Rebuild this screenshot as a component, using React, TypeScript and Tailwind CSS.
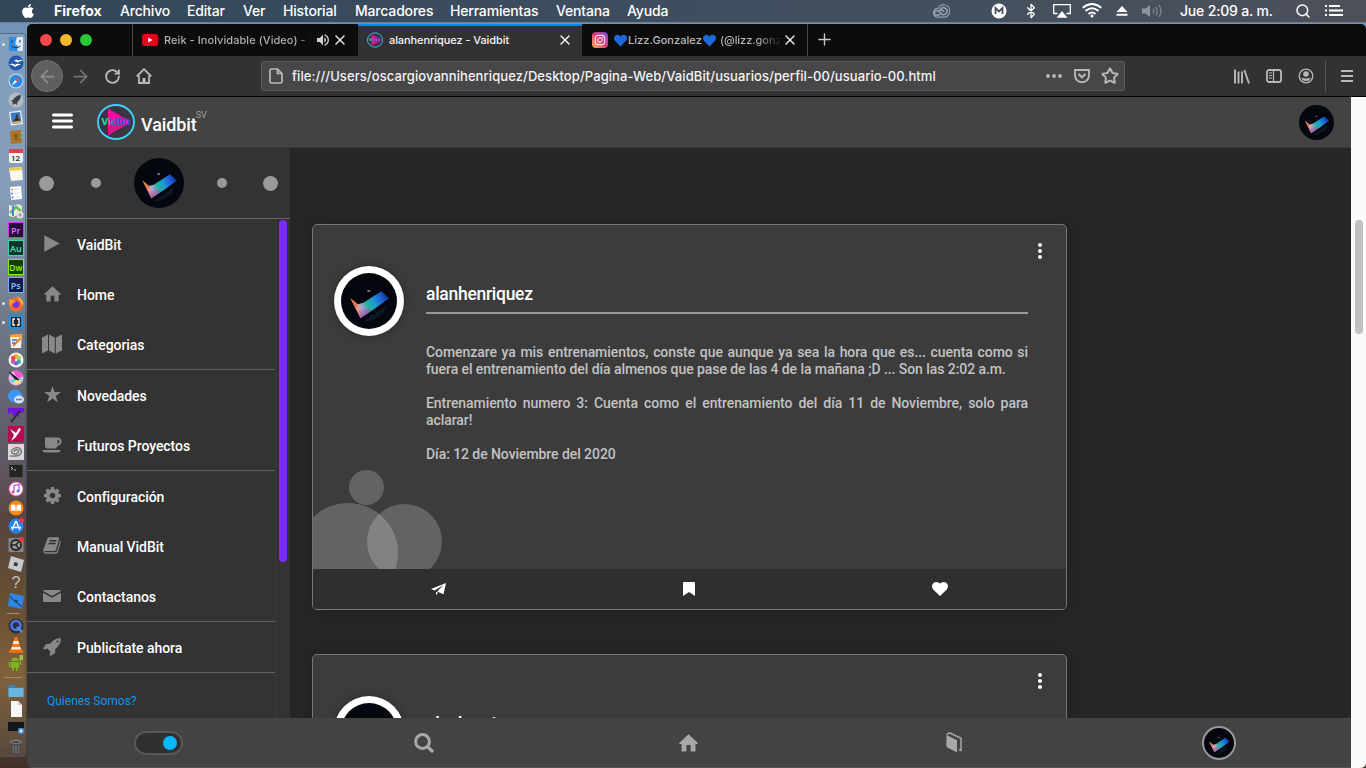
import React from "react";
import { FaApple, FaHeart, FaInstagram } from "react-icons/fa";
import { ArrowLeft, ArrowRight, Bluetooth, Plus, RotateCw, Search, Star, X } from "lucide-react";
import { MdMoreVert, MdVolumeUp } from "react-icons/md";

/* ---------- shared drawings ---------- */

function Avatar({ id, className }: { id: string; className: string }) {
  return (
    <svg viewBox="0 0 50 50" className={className}>
      <defs>
        <linearGradient id={id} x1="9" y1="34" x2="42" y2="17" gradientUnits="userSpaceOnUse">
          <stop offset="0" stopColor="#ef7a3c" />
          <stop offset="0.16" stopColor="#e8a090" />
          <stop offset="0.27" stopColor="#a8a4d0" />
          <stop offset="0.42" stopColor="#22b39c" />
          <stop offset="0.6" stopColor="#1c98d4" />
          <stop offset="0.8" stopColor="#1e58d4" />
          <stop offset="0.92" stopColor="#123a9c" />
          <stop offset="1" stopColor="#060d28" />
        </linearGradient>
        <linearGradient id={id + "s"} x1="17" y1="31" x2="21" y2="39" gradientUnits="userSpaceOnUse">
          <stop offset="0" stopColor="#b0449a" stopOpacity="0" />
          <stop offset="1" stopColor="#8a4ab0" stopOpacity="0.9" />
        </linearGradient>
      </defs>
      <circle cx="25" cy="25" r="25" fill="#04070d" />
      <path d="M20 43 L40 29 L38 36 L26 43Z" fill="#0d1824" />
      <path d="M8.500 22.500 L15 28 L20 26.500 L36 16.300 L43 22.500 L30 32 L17.300 40.300Z" fill={"url(#" + id + ")"} />
      <path d="M8.500 22.500 L15 28 L13.500 33Z" fill="#ee6c36" opacity="0.8" />
      <path d="M13.500 33 L22 31 L28 33 L17.300 40.300Z" fill={"url(#" + id + "s)"} />
      <ellipse cx="24.800" cy="16" rx="1.500" ry="0.700" fill="#b0b4b8" />
    </svg>
  );
}

function Logo({ id, className }: { id: string; className: string }) {
  return (
    <svg viewBox="0 0 38 36" className={className}>
      <defs>
        <linearGradient id={id} x1="0" x2="1">
          <stop offset="0" stopColor="#2ef08c" />
          <stop offset="0.25" stopColor="#30b8b8" />
          <stop offset="0.45" stopColor="#2c62c8" />
          <stop offset="1" stopColor="#3d50f0" />
        </linearGradient>
      </defs>
      <ellipse cx="19" cy="18" rx="18" ry="17" fill="#3a3540" stroke="#3fd0fa" strokeWidth="1.900" />
      <path d="M11 4.500 L34 18 L11 31.500Z" fill="#fa0aa0" />
      <path d="M14 21 L28 21 L11 31.500 V26Z" fill="#d01888" />
      <text x="4.500" y="21.300" fontSize="9.500" fontFamily="DejaVu Sans" fontWeight="700" textLength="29" lengthAdjust="spacingAndGlyphs" fill={"url(#" + id + ")"}>VidBit</text>
    </svg>
  );
}

function HomeGlyph({ className }: { className: string }) {
  return (
    <svg viewBox="0 0 18 17" className={className} fill="currentColor">
      <path d="M9 0.300 L17.800 8.600 Q18 9.400 17.200 9.400 H15.600 V16 Q15.600 16.600 15 16.600 H11 V10.400 H7 V16.600 H3 Q2.400 16.600 2.400 16 V9.400 H0.800 Q0 9.400 0.200 8.600Z" />
    </svg>
  );
}

function BookGlyph({ className }: { className: string }) {
  return (
    <svg viewBox="0 0 1664 1792" className={className} fill="currentColor">
      <path d="M1639 478q40 57 18 129l-275 906q-19 64-76.500 107.500T1183 1664H260q-77 0-148.500-53.500T12 1479q-24-67-2-127 0-4 3-27t4-37q1-8-3-21.500T11 1247q2-11 8-21t16.500-23.500T52 1179q23-38 45-91.500t30-91.500q3-10 .5-30t-.5-28q3-11 17-28t17-23q21-36 42-92t25-90q1-9-2.500-32t.5-28q4-13 22-30.500t22-22.500q19-26 42.500-84.500T340 409q1-8-3-25.500t-2-26.500q2-8 9-18t18-23 17-21q8-12 16.500-30.500t15-35 16-36 19.500-32T473 136t36-11.500T556 130l-1 3q38-9 51-9h761q74 0 114 56t18 130l-274 906q-36 119-71.500 153.500T1025 1404H156q-27 0-38 15-11 16-1 43 24 70 144 70h923q29 0 56-15.500t35-41.500l300-987q7-22 5-57 38 15 59 43zM575 480q-4 13 2 22.500t20 9.500h608q13 0 25.500-9.500T1247 480l21-64q4-13-2-22.500t-20-9.500H638q-13 0-25.500 9.500T596 416zm-83 256q-4 13 2 22.500t20 9.500h608q13 0 25.500-9.500t16.500-22.500l21-64q4-13-2-22.500t-20-9.500H555q-13 0-25.500 9.500T513 672z" />
    </svg>
  );
}

function GearGlyph({ className }: { className: string }) {
  return (
    <svg viewBox="0 128 1536 1536" className={className} fill="currentColor">
      <path d="M1024 896q0-106-75-181t-181-75-181 75-75 181 75 181 181 75 181-75 75-181zm512-109v222q0 12-8 23t-20 13l-185 28q-19 54-39 91 35 50 107 138 10 12 10 25t-9 23q-27 37-99 108t-94 71q-12 0-26-9l-138-108q-44 23-91 38-16 136-29 186-7 28-36 28H657q-14 0-24.500-8.500T621 1634l-28-184q-49-16-90-37l-141 107q-10 9-25 9-14 0-25-11-126-114-165-168-7-10-7-23 0-12 8-23 15-21 51-66.500t54-70.500q-27-50-41-99L29 1025q-13-2-21-12.500T0 989V787q0-12 8-23t19-13l186-28q14-46 39-92-40-57-107-138-10-12-10-24 0-10 9-23 26-36 98.500-107.500T337 267q13 0 26 10l138 107q44-23 91-38 16-136 29-186 7-28 36-28h222q14 0 24.500 8.500T915 162l28 184q49 16 90 37l142-107q9-9 24-9 13 0 25 10 129 119 165 170 7 8 7 22 0 12-8 23-15 21-51 66.500t-54 70.500q26 50 41 98l183 28q13 2 21 12.500t8 23.500z" />
    </svg>
  );
}

function RocketGlyph({ className }: { className: string }) {
  return (
    <svg viewBox="0 120 1670 1670" className={className} fill="currentColor">
      <path d="M1440 448q0-40-28-68t-68-28-68 28-28 68 28 68 68 28 68-28 28-68zm224-288q0 249-75.500 430.500T1335 958q-81 80-195 176l-20 379q-2 16-16 26l-384 224q-7 4-16 4-12 0-23-9l-64-64q-13-14-8-32l85-276-281-281-276 85q-3 1-9 1-14 0-23-9L41 1118q-17-19-5-39l224-384q10-14 26-16l379-20q96-114 176-195 188-187 358-258t431-71q14 0 24 9.500t10 22.500z" />
    </svg>
  );
}

function CupGlyph({ className }: { className: string }) {
  return (
    <svg viewBox="0 0 20 16" className={className} fill="currentColor">
      <path fillRule="evenodd" d="M3 0.500 H15.500 Q19.500 0.800 19.500 4.500 Q19.500 8.500 15.500 8.700 Q15 11.500 12 11.500 H6 Q3 11.500 3 8.700Z M15.500 2.500 V6.700 Q17.500 6.400 17.500 4.500 Q17.500 2.800 15.500 2.500Z M0.300 13 H18.700 Q18.200 15.500 15.500 15.500 H3.500 Q0.800 15.500 0.300 13Z" />
    </svg>
  );
}

function PlayGlyph({ className }: { className: string }) {
  return <svg viewBox="0 0 16 17" className={className} fill="currentColor"><path d="M0.300 0.200 L15.700 8.500 L0.300 16.800Z" /></svg>;
}

function MailGlyph({ className }: { className: string }) {
  return (
    <svg viewBox="0 0 18 12" className={className} fill="currentColor">
      <path d="M1 0 H17 Q18 0 17.600 1.200 L9 6 L0.400 1.200 Q0 0 1 0Z M0 2.800 L9 7.800 L18 2.800 V11 Q18 12 17 12 H1 Q0 12 0 11Z" />
    </svg>
  );
}

function PlaneGlyph({ className }: { className: string }) {
  return (
    <svg viewBox="0 0 15 12" className={className} fill="currentColor">
      <path d="M15 0 L0 6 L3.700 7.600 L12.500 2 L6.200 8.600 L12.500 11.200Z M5 8.900 V12 L7.200 9.800Z" />
    </svg>
  );
}

function BooksGlyph({ className }: { className: string }) {
  return (
    <svg viewBox="0 0 16 21" className={className}>
      <path d="M0.500 3 L11 8.200 V20.500 L1.500 15.500 Q0.300 15 0.300 13.500Z" fill="#a8a8a8" />
      <path d="M1 3 Q1.800 0.500 4 1 L15 6.300 V18.300 L13 17.500" fill="none" stroke="#a8a8a8" strokeWidth="1.500" />
    </svg>
  );
}

/* ---------- system menu bar ---------- */

const menus = [
  { label: "Archivo", w: "w-[67px]" },
  { label: "Editar", w: "w-[56px]" },
  { label: "Ver", w: "w-[40px]" },
  { label: "Historial", w: "w-[72px]" },
  { label: "Marcadores", w: "w-[95px]" },
  { label: "Herramientas", w: "w-[106px]" },
  { label: "Ventana", w: "w-[71px]" },
  { label: "Ayuda", w: "w-[60px]" },
];

function MenuBar() {
  return (
    <div className="flex h-[23px] shrink-0 items-center border-b border-[#6f7d8b] bg-linear-to-r from-[#33465a] via-[#3e4e60] to-[#4c5059] pb-px font-[Inter,sans-serif] text-[14px] font-medium tracking-[-0.180px] whitespace-nowrap text-white">
      <div className="w-[54px] pl-[20px]"><FaApple className="size-[16px]" /></div>
      <div className="w-[66px] font-bold tracking-[0.050px]">Firefox</div>
      {menus.map((m) => <div key={m.label} className={m.w}>{m.label}</div>)}
      <div className="ml-auto flex items-center">
        <svg viewBox="0 0 20 14" className="mr-[41px] h-[14px] w-[19px]" fill="none" stroke="#939eaa" strokeWidth="1.200">
          <path d="M6 13.400 H13.500 A6.400 6.400 0 1 0 7.500 4.200 A4.700 4.700 0 0 0 6 13.400Z" />
          <path d="M9.500 10.500 Q6 12.500 4 10.500 Q2.500 8 5 6.500 Q7.500 6 9.500 8.500 L11.500 10.500 Q15 12 16.800 8.500 Q17.500 5 14 3.500 Q10.500 3 9 6 Q12 5 13.500 8" strokeWidth="1.700" />
        </svg>
        <svg viewBox="0 0 16 16" className="mr-[16px] size-[16px]"><circle cx="8" cy="8" r="7.500" fill="#fff" /><path d="M4.500 11 V5 L8 8.500 L11.500 5 V11" fill="none" stroke="#44505e" strokeWidth="1.800" /></svg>
        <Bluetooth className="mr-[14px] size-[16px]" strokeWidth={2} />
        <svg viewBox="0 0 18 14" className="mr-[11px] h-[14px] w-[18px]" fill="none" stroke="#fff" strokeWidth="1.300"><path d="M4.500 9.500 H0.700 V0.700 H17.300 V9.500 H13.500" /><path d="M9 7 L14.500 13.800 H3.500Z" fill="#fff" stroke="none" /></svg>
        <svg viewBox="0 0 20 15" className="mr-[14px] h-[15px] w-[20px]" fill="none" stroke="#fff" strokeWidth="1.900"><path d="M0.700 4.800 Q10 -2.800 19.300 4.800 M3.500 8 Q10 2.600 16.500 8 M6.500 11 Q10 8 13.500 11" /><circle cx="10" cy="13" r="1.500" fill="#fff" stroke="none" /></svg>
        <svg viewBox="0 0 12 10" className="mr-[14px] h-[10px] w-[12px]" fill="#fff"><path d="M6 0 L11.500 6 H0.500Z M0.500 7.800 H11.500 V9.800 H0.500Z" /></svg>
        <svg viewBox="0 0 21 14" className="mr-[17px] h-[14px] w-[21px]" fill="none" stroke="#7d8792" strokeWidth="1.300"><path d="M0 4.500 H3.500 L8 1 V13 L3.500 9.500 H0Z" fill="#8c96a0" stroke="none" /><path d="M11 4.500 Q12.500 7 11 9.500 M14 2.800 Q16.500 7 14 11.200 M17 1 Q21 7 17 13" /></svg>
        <div className="w-[115px]">Jue 2:09 a. m.</div>
        <Search className="mr-[14px] size-[16px]" strokeWidth={2.200} />
        <svg viewBox="0 0 18 11" className="mr-[23px] h-[11px] w-[18px]" stroke="#fff" strokeWidth="1.800"><path d="M0 1 H2 M4 1 H15 M0 5.500 H2 M4 5.500 H18 M0 10 H2 M4 10 H18" /></svg>
      </div>
    </div>
  );
}

/* ---------- dock ---------- */

const dockArt: React.ReactNode[] = [
  <><rect x="1" y="1" width="14" height="14" rx="1" fill="#dfe9f5" /><path d="M1 1 H9 Q7 6 7.500 9 H9.500 V15 H1Z" fill="#2d8bea" /><path d="M4 4V6.500M12 4V6.500M3.500 10Q8 13.500 12.500 10" stroke="#234" fill="none" /></>,
  <><circle cx="8" cy="8" r="7.500" fill="#2259ae" /><path d="M6 6Q9 3 10 6Q12 4 15 5.500Q11 6 10 7.500Q8 6 6 6M1 10Q5 7 7 10Q9 8 13 9.500Q9 10 7 12Q4 9 1 10" fill="#fff" /></>,
  <><circle cx="8" cy="8" r="7.500" fill="#d8dde4" /><circle cx="8" cy="8" r="6.500" fill="#288be5" /><path d="M12.500 3.500 L7 7 L9 9Z" fill="#f44" /><path d="M3.500 12.500 L7 7 L9 9Z" fill="#fff" /></>,
  <><circle cx="8" cy="8" r="7.500" fill="#b4bcc0" /><path d="M13 3 Q8 3 5 8 L2.500 9 L5 10 L4 13 L7 11.500 L9 13 L9.500 10 Q13 7 13 3" fill="#39434c" /></>,
  <><path d="M1 2 L13 0.500 L15 14 L3 15.500Z" fill="#eef3f8" /><path d="M2.500 3 L12 2 L13.500 13 L4 14Z" fill="#397ac5" /><path d="M9 3 L7 9 L5 12 L13 11 L10 8Z" fill="#3b3023" /><path d="M4 12L13 10.500L13.300 13L4.200 14Z" fill="#c9b27a" /></>,
  <><path d="M2 2 L13 1 L14 14 L3 15Z" fill="#a9762f" /><path d="M13 3h2v2h-2z" fill="#6bb8db" /><path d="M13 7h2v2h-2z" fill="#78b85d" /><circle cx="8" cy="7" r="2" fill="#80541f" /><path d="M5 11Q8 8 11 11" fill="#80541f" /></>,
  <><rect x="1" y="1" width="14" height="14" rx="2" fill="#f4f4f4" /><path d="M1 1H15V5H1Z" fill="#e04646" /><text x="3" y="13" fontSize="8" fontFamily="Roboto" fontWeight="600" fill="#333">12</text></>,
  <><path d="M1 2 L14 1 L15 14 L3 15Z" fill="#faf8ec" /><path d="M1 2 L14 1V4L1 5Z" fill="#efcf52" /></>,
  <><path d="M2 2 L13 1 L14 14 L3 15Z" fill="#fff" /><path d="M6 4H11M6 8H12M6 12H12" stroke="#ddd" /><circle cx="4" cy="4.500" r="1" fill="#e76" /><circle cx="4" cy="8.500" r="1" fill="#5a7be8" /><circle cx="4.500" cy="12.500" r="1" fill="#94d" /></>,
  <><path d="M1 2 L5 3 L10 1 L14 3V14L10 12L5 14L1 13Z" fill="#e8ecd9" /><path d="M2 10L8 4L13 8" stroke="#69b95b" strokeWidth="2.500" fill="none" /><path d="M5 3V13" stroke="#4886df" strokeWidth="2" /><circle cx="12" cy="12" r="3.500" fill="#ddd" /><circle cx="12" cy="12" r="1.500" fill="#999" /></>,
  <><rect x="0.500" y="0.500" width="15" height="15" fill="#260c38" stroke="#d637ef" /><text x="3" y="11.500" fontSize="9" fontFamily="Open Sans" fontWeight="600" fill="#df7cf2">Pr</text></>,
  <><rect x="0.500" y="0.500" width="15" height="15" fill="#09352e" stroke="#39d8a0" /><text x="2" y="11.500" fontSize="9" fontFamily="Open Sans" fontWeight="600" fill="#61dfb4">Au</text></>,
  <><rect x="0.500" y="0.500" width="15" height="15" fill="#173d07" stroke="#8af000" /><text x="1.200" y="11.500" fontSize="8.500" fontFamily="Open Sans" fontWeight="600" fill="#9bf41a">Dw</text></>,
  <><rect x="0.500" y="0.500" width="15" height="15" fill="#0e1c48" stroke="#70b2ed" /><text x="2.800" y="11.500" fontSize="9" fontFamily="Open Sans" fontWeight="600" fill="#8cc5f5">Ps</text></>,
  <><circle cx="8" cy="8.500" r="7" fill="#ff6b25" /><path d="M9 0 Q16 4 15 10 Q13 5 9 0" fill="#ffd23c" /><circle cx="8" cy="8.500" r="3.500" fill="#7138d7" /><path d="M1 3Q5 3 8 6Q3 7 3 11Q1 8 1 3" fill="#ff9830" /></>,
  <><rect x="0.500" y="0.500" width="15" height="15" rx="2" fill="#258ed2" /><rect x="3" y="3" width="10" height="10" fill="#222" /><path d="M7 5H5V11H7M9 5H11V11H9" stroke="#fff" strokeWidth="1.300" fill="none" /></>,
  <><path d="M2 2 L14 1 L13 15H3Z" fill="#f6f0e6" /><path d="M2 2 L14 1 V4H2Z" fill="#fa9b25" /><path d="M5 13L13 5" stroke="#d98427" strokeWidth="2" /><path d="M4 7H9M4 10H7" stroke="#446ab5" strokeWidth="1.500" /></>,
  <><circle cx="8" cy="8" r="7.500" fill="#f7f4ef" /><circle cx="8" cy="4.500" r="2.400" fill="#ffa730" /><circle cx="10.800" cy="6" r="2.300" fill="#a6d34c" /><circle cx="10.800" cy="9.700" r="2.300" fill="#48aca6" /><circle cx="8" cy="11.300" r="2.300" fill="#6570d5" /><circle cx="5.200" cy="9.700" r="2.300" fill="#c657ae" /><circle cx="5.200" cy="6" r="2.300" fill="#ef4842" /></>,
  <><circle cx="8" cy="8" r="7.500" fill="#f3b3ea" /><path d="M5 1Q12 -1 15 6L10 9Z" fill="#e65bc8" /><path d="M1 10Q8 17 15 10L12 8Z" fill="#59d7ef" /><path d="M5 13Q10 16 14 11L9 9Z" fill="#f5e677" /><path d="M1 2L8 7L11 10L7 9Z" fill="#262335" stroke="#262335" /></>,
  <><ellipse cx="7" cy="7" rx="7" ry="6.500" fill="#3b97f3" /><ellipse cx="11" cy="10.500" rx="5" ry="4" fill="#d4e4f8" /><path d="M8.200 10.500H13.800" stroke="#2c58a0" strokeWidth="1.500" strokeDasharray="1.400 0.700" /></>,
  <><path d="M0 1H16V5L11 6V11L9 7L5 9L4 5L0 7Z" fill="#7410e0" /><path d="M3 15L12 4" stroke="#302030" strokeWidth="1.800" /></>,
  <><rect width="16" height="16" fill="#b80852" /><path d="M2 3L8 7L11 2L13 3L10 8L7 12L3 15L6 9Z" fill="#fff" /></>,
  <><rect width="16" height="16" fill="#d8d8d6" /><path d="M2 12Q15 13 13 6Q10 1 4 6Q2 10 8 10Q12 8 10 6Q7 5 6 8" fill="none" stroke="#777" strokeWidth="1.500" /></>,
  <><rect x="1" y="1.500" width="14" height="13" rx="1" fill="#222" stroke="#555" /><path d="M3 4L5 5.500L3 7M6 7H8" stroke="#eee" fill="none" strokeWidth="0.800" /></>,
  <><circle cx="8" cy="8" r="7.500" fill="#e8569e" /><circle cx="8" cy="8" r="6.500" fill="#fff" /><path d="M6 11V4.500L11 3.500V10" stroke="#b05ae5" fill="none" strokeWidth="1.300" /><circle cx="5" cy="11" r="1.500" fill="#ec4c83" /><circle cx="10" cy="10" r="1.500" fill="#5474ef" /></>,
  <><circle cx="8" cy="8" r="7.500" fill="#f88b1c" /><path d="M3 5Q6 4 8 5.500Q10 4 13 5V11Q10 10 8 11.500Q6 10 3 11Z" fill="#fff" /><path d="M8 5V11" stroke="#f88b1c" /></>,
  <><circle cx="8" cy="8" r="7.500" fill="#2484f3" /><path d="M8 3L4 12M8 3L12 12M3 9.500H13" stroke="#fff" strokeWidth="1.400" /><circle cx="13.500" cy="2.500" r="2.500" fill="#ef344a" /></>,
  <><rect x="0.500" y="1" width="15" height="14" rx="1" fill="#858585" /><circle cx="8" cy="8" r="5" fill="#999" stroke="#242424" strokeWidth="1.800" /><path d="M3 8H8L11 4M8 8L11 12" stroke="#222" strokeWidth="1.300" fill="none" /><circle cx="13.500" cy="2.500" r="2.500" fill="#ef344a" /></>,
  <><path d="M3 0L16 4L13 16L0 12Z" fill="#c6c9cc" /><path d="M6.500 6L10 7L9 10.500L5.500 9.500Z" fill="#38383a" /></>,
  <><text x="3.500" y="14" fontSize="16" fontFamily="Liberation Sans" fill="#c6c2be">?</text></>,
  <><path d="M2 0L16 3L14 16L0 13Z" fill="#2e86e4" /><path d="M1 3L14 14" stroke="#15335b" /><path d="M7 6.500L10 7.500L9 10L6 9Z" fill="#20406a" /></>,
];

const dockApps: React.ReactNode[] = [
  <><circle cx="8" cy="8" r="7.500" fill="#2c3038" /><circle cx="8" cy="7.500" r="4.500" fill="none" stroke="#4a78ed" strokeWidth="2.500" /><path d="M9 9L14 14" stroke="#5788e8" strokeWidth="2.500" /></>,
  <><path d="M7 0H9L14 14H2Z" fill="#f57919" /><path d="M5.700 4H10.300L11.200 7H4.800ZM4 10H12L13 12.500H3Z" fill="#f6ede5" /><path d="M1 13H15V16H1Z" fill="#e96c10" /></>,
  <><path d="M3 6 Q3.500 2.500 7 2.500 Q10.500 2.500 11 6Z M3 7H11V13H9.500V16H8V13H6V16H4.500V13H3Z M0.800 7H2.300V12H0.800Z M11.700 4H13.200V10H11.700Z" fill="#7db321" /><rect x="11.500" y="0" width="3.500" height="5" rx="0.500" fill="#9cc840" /></>,
];

const dockFiles: React.ReactNode[] = [
  <><path d="M0.500 2H6L8 4H15.500V14H0.500Z" fill="#3587b7" /><path d="M0.500 5H15.500V14H0.500Z" fill="#67b6df" /></>,
  <><path d="M3 0H10L14 4V16H3Z" fill="#f5f5f5" /><path d="M10 0V4H14" fill="#ccc" /></>,
  <><rect y="2" width="16" height="9" fill="#161618" /><rect x="10" y="8" width="6" height="6" rx="1" fill="#3c82c6" /><path d="M11 11H15M13 9V13" stroke="#fff" /></>,
  <><path d="M2 3L4 15.500H12L14 3Z" fill="#4c4c4c" /><ellipse cx="8" cy="2.800" rx="6" ry="2" fill="#8b8b8b" /><ellipse cx="8" cy="3" rx="4.300" ry="1" fill="#444" /><path d="M5 6L6 14M8 6V14M11 6L10 14" stroke="#888" strokeWidth="0.700" /></>,
];

function DockIcon({ children, running = false }: { children: React.ReactNode; running?: boolean }) {
  return (
    <div className="flex h-[18.550px] shrink-0 items-center">
      <span className={running ? "mr-[3px] ml-[2px] size-[3px] rounded-full bg-[#dfe6ee]" : "mr-[3px] ml-[2px] size-[3px]"} />
      <svg viewBox="0 0 16 16" className="size-[16px]">{children}</svg>
    </div>
  );
}

function Dock() {
  return (
    <aside className="flex w-[27px] shrink-0 flex-col pt-[10px] pr-px">
      <div className="flex h-[724px] flex-col rounded-r border-t border-r border-b border-[#4b5968]/70 bg-white/10 pt-[1px]">
        {dockArt.map((art, i) => <DockIcon key={i} running={i === 0 || i === 14 || i === 15}>{art}</DockIcon>)}
        <div className="mt-[3px] mb-[3px] ml-[7px] h-px w-[12px] shrink-0 bg-[#a58d70]" />
        {dockApps.map((art, i) => <DockIcon key={i}>{art}</DockIcon>)}
        <div className="my-[4px] ml-[4px] h-px w-[18px] shrink-0 bg-[#a58d50]" />
        {dockFiles.map((art, i) => <DockIcon key={i}>{art}</DockIcon>)}
      </div>
    </aside>
  );
}

/* ---------- browser chrome ---------- */

function TabStrip() {
  return (
    <div className="flex h-[32px] shrink-0 bg-[#0c0c0d] font-[Inter,sans-serif] text-[11px] text-[#b8b8ba]">
      <div className="flex w-[105px] items-center gap-[8px] pl-[13px]">
        <span className="size-[12px] rounded-full bg-[#f4484f]" />
        <span className="size-[12px] rounded-full bg-[#f8b62c]" />
        <span className="size-[12px] rounded-full bg-[#2bc733]" />
      </div>
      <div className="flex w-[226px] items-center border-l border-[#4a4a4c] pl-[9px]">
        <svg viewBox="0 0 16 12" className="mr-[6px] h-[12px] w-[16px]"><rect width="16" height="12" rx="2.500" fill="#e8031c" /><path d="M6.200 3.500L10.500 6L6.200 8.500Z" fill="#fff" /></svg>
        <span className="w-[148px] overflow-hidden bg-linear-to-r from-[#b8b8ba] from-90% to-transparent bg-clip-text font-medium tracking-[0.060px] whitespace-nowrap text-transparent">Reik - Inolvidable (Video) - YouTube</span>
        <MdVolumeUp className="ml-[3px] size-[16px] text-[#d0d0d2]" />
        <X className="ml-[1px] size-[16px] text-[#e8e8ea]" strokeWidth={2.200} />
      </div>
      <div className="flex w-[224px] items-center border-t-2 border-[#0a84ff] bg-[#323234] pb-[2px] pl-[9px] text-[#f4f4f5]">
        <Logo id="tabLogo" className="mr-[6px] size-[16px]" />
        <span className="w-[168px] font-medium tracking-[-0.080px]">alanhenriquez - Vaidbit</span>
        <X className="size-[16px]" strokeWidth={2.200} />
      </div>
      <div className="flex w-[226px] items-center border-r border-[#4a4a4c] pl-[10px]">
        <span className="mr-[6px] flex size-[16px] items-center justify-center rounded-[4px] bg-linear-to-tr from-[#fcb045] via-[#e1306c] to-[#6c3bdc]"><FaInstagram className="size-[12px] text-white" /></span>
        <span className="flex w-[166px] items-center overflow-hidden whitespace-nowrap">
          <FaHeart className="mr-[1px] size-[13px] shrink-0 text-[#1d69dc]" />
          <span className="font-medium tracking-[0.050px]">Lizz.Gonzalez</span>
          <FaHeart className="mx-[1px] size-[13px] shrink-0 text-[#1d69dc]" />
          <span className="ml-[3px] bg-linear-to-r from-[#b8b8ba] from-60% to-transparent bg-clip-text font-medium tracking-[-0.050px] text-transparent">(@lizz.gonz</span>
        </span>
        <X className="ml-[2px] size-[16px] shrink-0 text-[#e8e8ea]" strokeWidth={2.200} />
      </div>
      <div className="flex items-center pb-[2px] pl-[7px]"><Plus className="size-[19px] text-[#c8c8ca]" strokeWidth={1.800} /></div>
    </div>
  );
}

function Toolbar() {
  return (
    <div className="flex h-[41px] shrink-0 items-center border-b border-black bg-[#323234] text-[#b9b9bb]">
      <div className="ml-[4px] flex size-[32px] items-center justify-center rounded-full border border-[#747476] bg-[#5f5f60]"><ArrowLeft className="size-[21px] text-[#8e8e90]" strokeWidth={2} /></div>
      <ArrowRight className="ml-[7px] size-[21px] text-[#747476]" strokeWidth={2} />
      <RotateCw className="ml-[13px] size-[17px]" strokeWidth={2.600} />
      <svg viewBox="0 0 16 16" className="ml-[15px] size-[16px]" fill="none" stroke="currentColor" strokeWidth="1.800"><path d="M0.700 8.500 L8 1.200 L15.300 8.500" strokeLinejoin="round" /><path d="M3 7.500V15H13V7.500" /><path d="M8 15V10" strokeWidth="3" /></svg>
      <div className="ml-[109px] flex h-[30px] w-[864px] items-center rounded-[3px] border border-[#5c5c5e] bg-[#474749]">
        <svg viewBox="0 0 14 16" className="ml-[7px] h-[16px] w-[14px]" fill="none" stroke="currentColor" strokeWidth="1.700"><path d="M1 2.500 Q1 1 2.500 1 H8.500 L13 5.500 V13.500 Q13 15 11.500 15 H2.500 Q1 15 1 13.500Z M8.500 1V5.500H13" /></svg>
        <span className="mt-[2px] ml-[9px] w-[753px] font-[Inter,sans-serif] text-[13px] font-medium tracking-[0.079px] whitespace-nowrap text-[#f4f4f5]">file:///Users/oscargiovannihenriquez/Desktop/Pagina-Web/VaidBit/usuarios/perfil-00/usuario-00.html</span>
        <svg viewBox="0 0 16 4" className="ml-px h-[4px] w-[16px] shrink-0" fill="currentColor"><circle cx="2" cy="2" r="1.900" /><circle cx="8" cy="2" r="1.900" /><circle cx="14" cy="2" r="1.900" /></svg>
        <svg viewBox="0 0 16 14" className="ml-[12px] h-[14px] w-[16px] shrink-0" fill="none" stroke="currentColor" strokeWidth="1.800"><path d="M1 1H15V6Q15 10 12 12Q8 14.500 4 12Q1 10 1 6Z" /><path d="M4.500 5L8 8.300L11.500 5" strokeWidth="2" /></svg>
        <Star className="ml-[11px] size-[18px] shrink-0" strokeWidth={2.600} />
      </div>
      <div className="ml-auto flex items-center">
        <svg viewBox="0 0 16 15" className="h-[15px] w-[16px]" stroke="currentColor" strokeWidth="1.900"><path d="M1 0.500V14.500M4.500 2.500V14.500M8 2.500V14.500M10.300 1L15 14.500" /></svg>
        <svg viewBox="0 0 16 14" className="ml-[16px] h-[14px] w-[16px]" fill="none" stroke="currentColor" strokeWidth="1.800"><rect x="1" y="1" width="14" height="12" rx="2" /><path d="M7.500 1V13M3 4H6M3 6.500H6M3 9H6" strokeWidth="1.200" /></svg>
        <svg viewBox="0 0 16 16" className="ml-[16px] size-[16px]"><circle cx="8" cy="8" r="6.800" fill="none" stroke="currentColor" strokeWidth="1.300" /><circle cx="8" cy="6" r="2.800" fill="currentColor" /><path d="M3.200 9.500Q8 11.500 12.800 9.500Q11.500 13 8 13Q4.500 13 3.200 9.500" fill="currentColor" /></svg>
        <span className="ml-[11px] h-[33px] w-px bg-[#555557]" />
        <svg viewBox="0 0 12 12" className="mr-[13px] ml-[15px] size-[12px]" stroke="currentColor" strokeWidth="2"><path d="M0 1H12M0 6H12M0 11H12" /></svg>
      </div>
    </div>
  );
}

/* ---------- page ---------- */

const groups = [
  [
    { label: "VaidBit", icon: <PlayGlyph className="h-[17px] w-[16px]" /> },
    { label: "Home", icon: <HomeGlyph className="h-[16px] w-[17px]" /> },
    { label: "Categorias", icon: <svg viewBox="0 0 20 20" className="size-[20px]" fill="currentColor"><path d="M0 3.500L6 0.500V16.500L0 19.500ZM7 0.500L12.800 3.500V19.500L7 16.500ZM13.800 3.500L20 0.500V16.500L13.800 19.500Z" /></svg> },
  ],
  [
    { label: "Novedades", icon: <svg viewBox="0 0 16 16" className="size-[17px]" fill="currentColor"><path d="M8 0L9.900 5.700H16L11.100 9.300L13 15.300L8 11.700L3 15.300L4.900 9.300L0 5.700H6.100Z" /></svg> },
    { label: "Futuros Proyectos", icon: <CupGlyph className="h-[16px] w-[20px]" /> },
  ],
  [
    { label: "Configuración", icon: <GearGlyph className="size-[17px]" /> },
    { label: "Manual VidBit", icon: <BookGlyph className="h-[19px] w-[18px]" /> },
    { label: "Contactanos", icon: <MailGlyph className="h-[12px] w-[18px]" /> },
  ],
  [{ label: "Publicítate ahora", icon: <RocketGlyph className="size-[18px]" /> }],
];

function Sidebar() {
  return (
    <aside className="flex w-[263px] shrink-0 flex-col bg-[#333333]">
      <div className="flex h-[71px] shrink-0 items-center justify-between border-b border-[#666666] pr-[12px] pl-[12px]">
        <span className="size-[15px] rounded-full bg-[#999999]" />
        <span className="-mr-[4px] size-[10px] rounded-full bg-[#999999]" />
        <Avatar id="avSide" className="size-[50px]" />
        <span className="-mr-px -ml-[3px] size-[10px] rounded-full bg-[#999999]" />
        <span className="size-[15px] rounded-full bg-[#999999]" />
      </div>
      <div className="flex min-h-0 flex-1">
        <nav className="w-[248px] font-[Roboto,sans-serif] text-[14px] font-medium tracking-[-0.050px] text-white">
          {groups.map((g, i) => (
            <div key={i} className="border-b border-[#626262]">
              {g.map((row) => (
                <div key={row.label} className="flex h-[50px] items-center">
                  <span className="flex w-[50px] justify-center pb-[1px] text-[#888888]">{row.icon}</span>
                  <span className="pt-[2px]">{row.label}</span>
                </div>
              ))}
            </div>
          ))}
          <div className="pt-[19px] pl-[20px] text-[12px] leading-[18px] font-normal tracking-normal text-[#0f97ef]">Quienes Somos?</div>
        </nav>
        <div className="w-[15px] border-l border-[#3a3a3a] pt-px pl-[3px]"><div className="h-[342px] w-[8px] rounded-full bg-[#7b2bff]" /></div>
      </div>
    </aside>
  );
}

function Post({ id, children }: { id: string; children?: React.ReactNode }) {
  return (
    <article className="flex h-[386px] w-[755px] shrink-0 flex-col overflow-hidden rounded-[5px] border border-[#777777] bg-[#3c3c3c] font-[Roboto,sans-serif] shadow-[0_0_14px_rgba(0,0,0,0.2)]">
      <div className="relative flex min-h-0 flex-1 overflow-hidden">
        <svg viewBox="0 0 130 100" className="absolute bottom-0 left-0 h-[100px] w-[130px]" fill="#fff" fillOpacity="0.2">
          <circle cx="53.500" cy="18.500" r="17.500" /><circle cx="35" cy="84" r="50" /><circle cx="91.500" cy="72.500" r="37.500" />
        </svg>
        <div className="mt-[41px] ml-[21px] size-[70px] shrink-0 rounded-full bg-white p-[7px] shadow-[0_0_8px_rgba(0,0,0,0.3)]"><Avatar id={id} className="size-[56px]" /></div>
        <div className="mt-[59px] ml-[22px] w-[602px]">
          <h2 className="h-[30px] border-b-2 border-[#999999] text-[17.500px] leading-[21px] font-medium tracking-[-0.280px] text-white">alanhenriquez</h2>
          <div className="mt-[30px] space-y-[17px] text-justify text-[14px] leading-[17px] font-medium tracking-[-0.070px] text-[#c2c2c2]">{children}</div>
        </div>
        <MdMoreVert className="mt-[14px] ml-0 size-[24px] text-white" />
      </div>
      <footer className="grid h-[40px] shrink-0 grid-cols-3 place-items-center bg-[#2f2f2f] text-white">
        <PlaneGlyph className="mr-px h-[12px] w-[15px]" />
        <svg viewBox="0 0 12 14" className="mr-[2px] h-[14px] w-[12px]" fill="currentColor"><path d="M0 1Q0 0 1 0H11Q12 0 12 1V14L6 10L0 14Z" /></svg>
        <svg viewBox="0 0 16 14" className="mr-[1px] h-[14px] w-[16px]" fill="currentColor"><path d="M8 14L1.200 7.500Q-1 4 1 1.500Q4.500 -1.500 8 1.600Q11.500 -1.500 15 1.500Q17 4 14.800 7.500Z" /></svg>
      </footer>
    </article>
  );
}

function BottomNav() {
  return (
    <footer className="grid h-[50px] shrink-0 grid-cols-5 place-items-center border-b border-[#555555] bg-[#434343] text-[#a8a8a8]">
      <div className="mr-[2px] flex h-[24px] w-[49px] items-center justify-end rounded-full border-2 border-[#585858] bg-[#303030] pr-[4px]"><span className="size-[14px] rounded-full bg-[#08b8ff]" /></div>
      <svg viewBox="0 0 20 20" className="size-[20px]" fill="none" stroke="currentColor"><circle cx="8.500" cy="8.500" r="6.900" strokeWidth="3" /><path d="M13.500 13.500L18 18" strokeWidth="3.200" strokeLinecap="round" /></svg>
      <HomeGlyph className="h-[18px] w-[19px]" />
      <BooksGlyph className="h-[21px] w-[16px]" />
      <div className="size-[34px] rounded-full bg-[#999999] p-[2px]"><Avatar id="avNav" className="size-[30px]" /></div>
    </footer>
  );
}

function Page() {
  return (
    <div className="flex min-h-0 flex-1">
      <div className="flex w-[1324px] shrink-0 flex-col bg-[#262626]">
        <header className="flex h-[51px] shrink-0 items-center border-b border-[#383838] bg-[#434343]">
          <svg viewBox="0 0 21 16" className="mb-[2px] ml-[25px] h-[16px] w-[21px]" stroke="#fff" strokeWidth="3" strokeLinecap="round"><path d="M1.500 2H19.500M1.500 8H19.500M1.500 14H19.500" /></svg>
          <Logo id="headLogo" className="ml-[24px] h-[36px] w-[38px]" />
          <span className="mt-[5px] ml-[6px] flex font-[Roboto,sans-serif] text-[18px] leading-[22px] font-medium tracking-[-0.080px] text-white">Vaidbit<sup className="top-[-4px] -ml-px text-[9px] leading-[10px] font-normal text-[#a0a0a0]">SV</sup></span>
          <Avatar id="avHead" className="mr-[17px] ml-auto size-[35px]" />
        </header>
        <div className="flex min-h-0 flex-1 overflow-hidden">
          <Sidebar />
          <main className="flex min-h-0 flex-1 flex-col gap-[44px] overflow-hidden pt-[76px] pl-[22px]">
            <Post id="avPost1">
              <p>Comenzare ya mis entrenamientos, conste que aunque ya sea la hora que es... cuenta como si fuera el entrenamiento del día almenos que pase de las 4 de la mañana ;D ... Son las 2:02 a.m.</p>
              <p>Entrenamiento numero 3: Cuenta como el entrenamiento del día 11 de Noviembre, solo para aclarar!</p>
              <p>Día: 12 de Noviembre del 2020</p>
            </Post>
            <Post id="avPost2" />
          </main>
        </div>
        <BottomNav />
      </div>
      <div className="flex-1 bg-[#fafafa] pt-[123px] pl-[4px]"><div className="h-[114px] w-[8px] rounded-full bg-[#c1c1c1]" /></div>
    </div>
  );
}

export default function App() {
  return (
    <div className="flex h-[768px] w-[1366px] flex-col overflow-hidden bg-[linear-gradient(180deg,#7193b9_0%,#7892b0_25%,#667386_38%,#555766_50%,#4c414c_62%,#443029_68%,#563b1b_78%,#735026_88%,#403129_100%)]">
      <MenuBar />
      <div className="flex min-h-0 flex-1">
        <Dock />
        <div className="mt-px flex min-w-0 flex-1 flex-col overflow-hidden rounded-[5px]">
          <TabStrip />
          <Toolbar />
          <Page />
        </div>
      </div>
    </div>
  );
}
